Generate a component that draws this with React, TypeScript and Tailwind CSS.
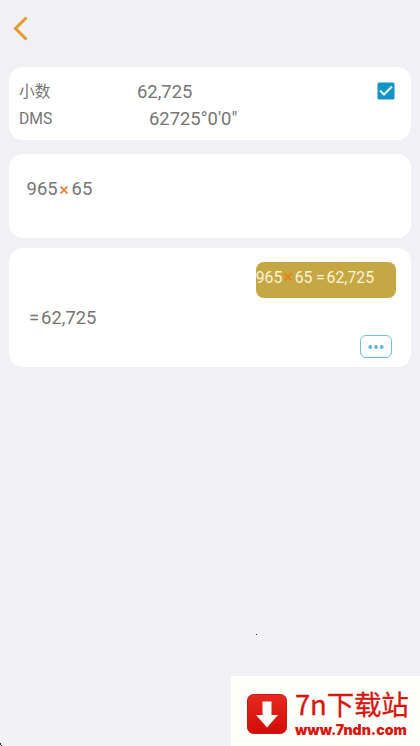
import React from "react";

function BackIcon() {
  return (
    <svg width="16" height="26" viewBox="0 0 16 26" fill="none" stroke="#e09a2e" strokeWidth="3">
      <path d="M14.5 1.5 L3.5 12.5 L14.5 23.5" />
    </svg>
  );
}

function CheckedBox() {
  return (
    <svg width="18" height="18" viewBox="0 0 18 18" fill="none">
      <rect x="0.5" y="0.5" width="17" height="17" rx="1.5" fill="#1295c5" />
      <path d="M3 8.5 L7 12.5 L15 4.5" stroke="#e6fbff" strokeWidth="2" />
    </svg>
  );
}

function MoreButton() {
  return (
    <button className="flex h-[23px] w-8 items-center justify-center rounded-md border border-[#6cbfe0] bg-white">
      <svg width="16" height="4" viewBox="0 0 16 4" fill="#5ab4dc">
        <circle cx="2.3" cy="2" r="1.9" />
        <circle cx="8" cy="2" r="1.9" />
        <circle cx="13.7" cy="2" r="1.9" />
      </svg>
    </button>
  );
}

function Times({ className }: { className: string }) {
  return (
    <svg className={className} width="8" height="8" viewBox="0 0 8 8" stroke="currentColor" strokeWidth="1.9">
      <path d="M0.5 0.5 L7.5 7.5 M7.5 0.5 L0.5 7.5" />
    </svg>
  );
}

function SiteLogo() {
  return (
    <svg width="40" height="40" viewBox="0 0 40 40">
      <defs>
        <linearGradient id="logoRed" x1="0" y1="0" x2="0" y2="1">
          <stop offset="0" stopColor="#e62a20" />
          <stop offset="1" stopColor="#d20c08" />
        </linearGradient>
      </defs>
      <rect x="0.5" y="0.5" width="39" height="39" rx="6" fill="url(#logoRed)" stroke="#c81a14" />
      <path d="M15.5 7.5 H24.5 V21 H31 L20 33.5 L9 21 H15.5 Z" fill="#fffefa" />
    </svg>
  );
}

export default function App() {
  return (
    <div className="relative h-[746px] w-[420px] overflow-hidden bg-[#f0f0f5] font-['Roboto','Noto_Sans_CJK_SC',sans-serif] text-[#757575]">
      <header className="flex h-[67px] items-start pt-4 pl-3">
        <BackIcon />
      </header>

      <main className="mx-[9px]">
        {/* Formats */}
        <section className="flex h-[73px] rounded-[14px] bg-white pt-[11px] pl-[10px]">
          <div className="w-[118px] text-[15.7px] leading-[27px]">
            <div>小数</div>
            <div>DMS</div>
          </div>
          <div className="flex-1 text-[18.4px] leading-[27px]">
            <div>62,725</div>
            <div className="pl-3">62725°0'0"</div>
          </div>
          <div className="pt-1 pr-4">
            <CheckedBox />
          </div>
        </section>

        {/* Expression */}
        <section className="mt-[14px] h-[84px] rounded-[14px] bg-white pt-[21px] pl-[17px]">
          <div className="flex items-center pl-[0.6px] text-[18.4px] leading-7">
            <span>965</span>
            <Times className="mt-0.5 mr-[3.5px] ml-[2.5px] text-[#e8853a]" />
            <span>65</span>
          </div>
        </section>

        {/* Result */}
        <section className="mt-[10px] flex h-[119px] flex-col rounded-[14px] bg-white pt-[14px] pr-[15px]">
          <div className="flex h-9 w-[140px] items-start self-end overflow-hidden rounded-lg bg-[#c5a844] pt-1 text-[15.8px] leading-6 text-[#fbf3d6]">
            <span className="-ml-[0.3px]">965</span>
            <Times className="mt-[7px] mr-[3px] ml-[1.3px] text-[#f07c1c]" />
            <span>65</span>
            <span className="ml-[3.5px]">=</span>
            <span className="ml-[2px]">62,725</span>
          </div>
          <div className="mt-[6px] flex pl-[20px] text-[18.4px] leading-7">
            <span>=</span>
            <span className="ml-[2px]">62,725</span>
          </div>
          <div className="mt-[3px] mr-1 self-end">
            <MoreButton />
          </div>
        </section>
      </main>

      <div className="absolute top-[634px] left-[256px] h-px w-px bg-[#251a80]" />
      <div className="absolute top-[743px] left-0 h-[2px] w-px bg-[#222]" />
      <div className="absolute top-[745px] left-px h-px w-px bg-[#222]" />

      {/* Download site badge */}
      <div className="absolute right-0 bottom-0 flex h-[70px] w-[189px] bg-[#fffffa] pt-[18px] pl-4 text-[#d9150f]">
        <SiteLogo />
        <div className="-mt-[10px] ml-2 whitespace-nowrap">
          <div className="text-[27.5px] leading-[38px] tracking-[-0.2px] font-['Noto_Sans_CJK_SC',sans-serif] [-webkit-text-stroke:0.3px_#d9150f]">7n下载站</div>
          <div className="text-[14.1px] leading-[15px] font-black font-['Inter','Roboto',sans-serif]">www.7ndn.com</div>
        </div>
      </div>
    </div>
  );
}
